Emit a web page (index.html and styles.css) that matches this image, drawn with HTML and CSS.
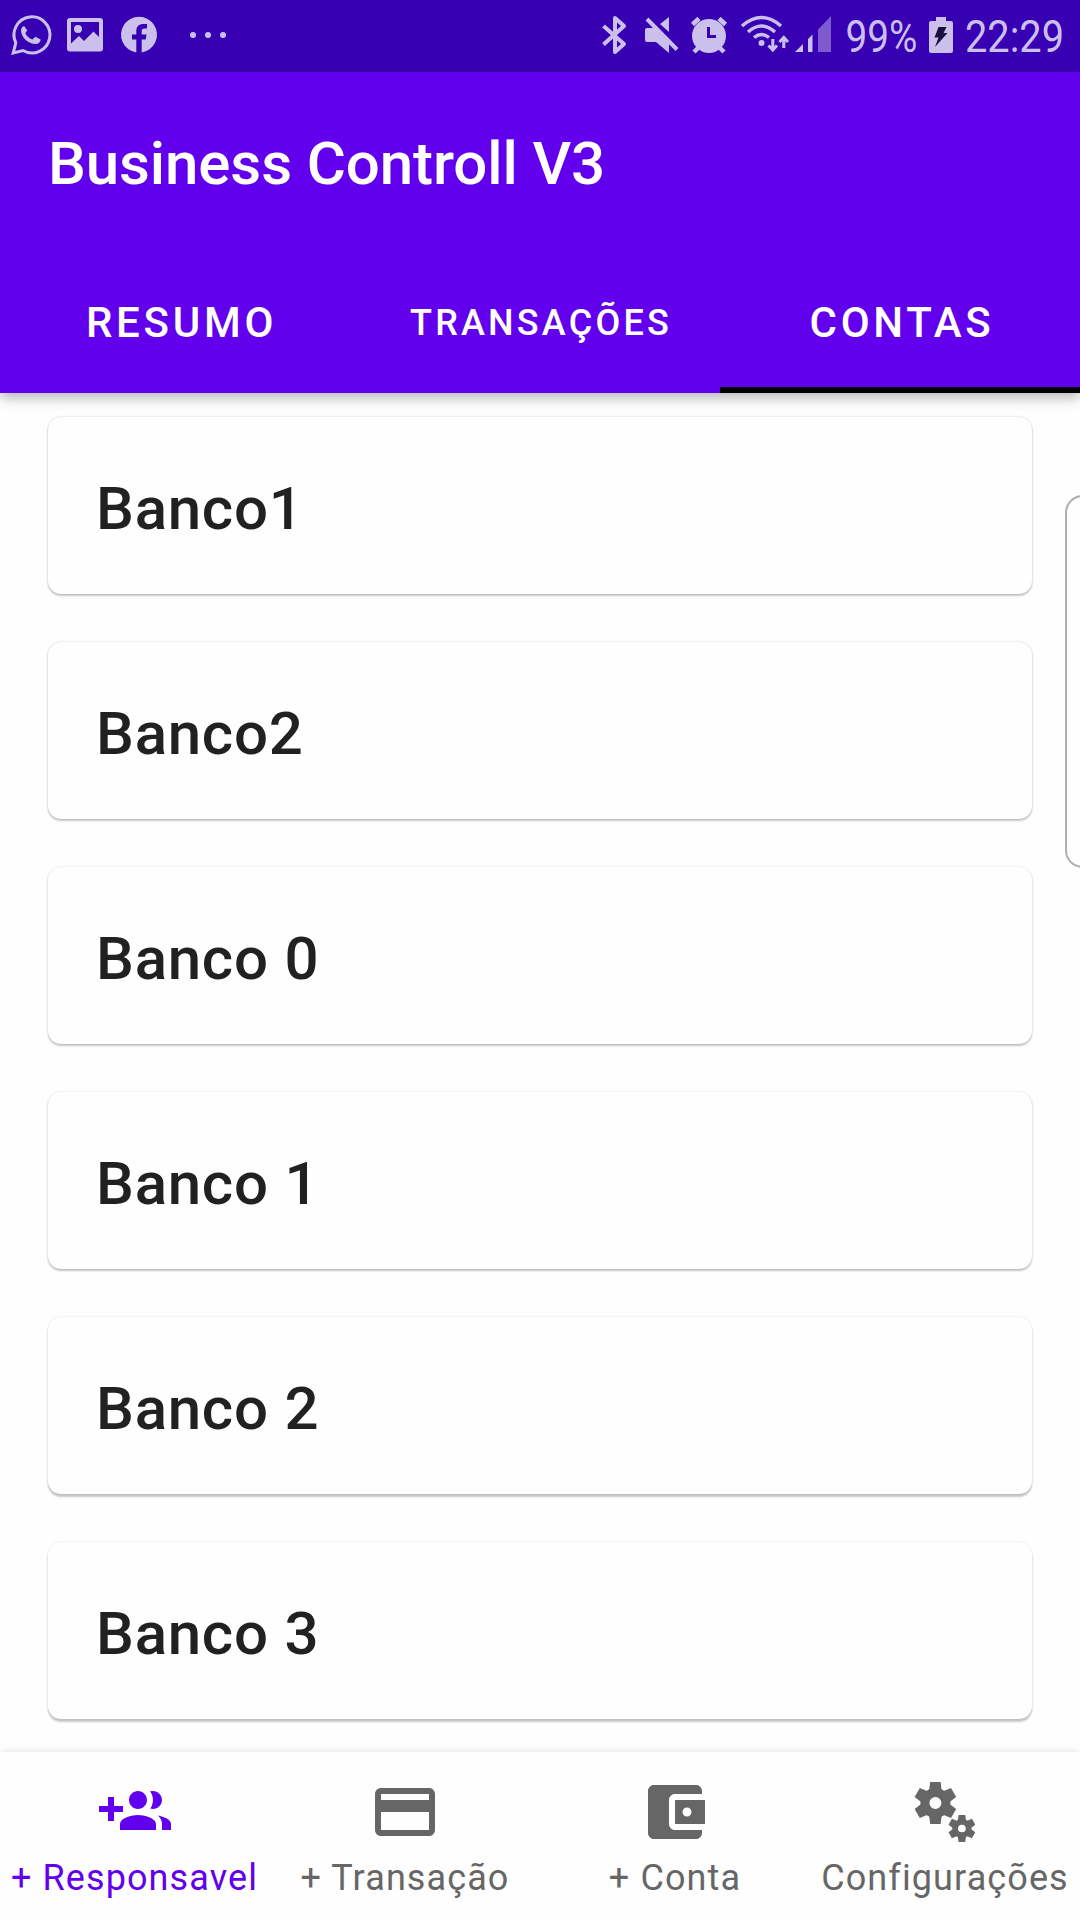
FILE: index.html
```html
<!DOCTYPE html>
<html lang="pt-BR">
<head>
<meta charset="utf-8">
<title>Business Controll V3</title>
<link rel="stylesheet" href="styles.css">
</head>
<body>
<div class="screen">
  <div class="status-bar">
    <div class="status-group">
      <svg width="56" height="72" viewBox="0 0 56 72"><path d="M13.2 53l2.6-10.2A18 18 0 1 1 23 50.5z" fill="none" stroke="currentColor" stroke-width="3"/><path d="M24.5 26.4c-1.3-.6-3.5 1.700-3.500 4.300C21.500 38.500 29 43.800 35.500 44c3 0 5-1.800 5.200-4.500l-5.400-2.800-2.900 2.900c-3.200-1-5.800-3.500-7.100-6.500l2-2.700z" fill="currentColor"/></svg>
      <svg width="56" height="72" viewBox="56 0 56 72"><path fill="currentColor" fill-rule="evenodd" d="M70 18H100a3 3 0 0 1 3 3V48.500a3 3 0 0 1-3 3H70a3 3 0 0 1-3-3V21a3 3 0 0 1 3-3ZM71 22V43.500L79 36L84 41L93.500 31.500L99 37V22Z"/><circle cx="78" cy="29" r="4" fill="currentColor"/></svg>
      <svg width="56" height="72" viewBox="112 0 56 72"><path fill="currentColor" d="M136.300 52.500V39.500H132V34.500H136.300V31C136.300 26.500 139 24 143.500 24H147V28.500H144.500C142.300 28.500 141.700 29.700 141.700 31.300V34.500H146.500L145.700 39.500H141.700V52.500A18 18 0 1 0 136.300 52.500Z"/></svg>
      <svg width="70" height="72" viewBox="168 0 70 72" fill="currentColor"><circle cx="193" cy="35" r="3"/><circle cx="208" cy="35" r="3"/><circle cx="223" cy="35" r="3"/></svg>
    </div>
    <div class="status-group">
      <svg width="46" height="72" viewBox="592 0 46 72"><path d="M603.500 26L624 44L615 52V18L624 26L603.500 44.500" fill="none" stroke="currentColor" stroke-width="4" stroke-linejoin="round"/></svg>
      <svg width="46" height="72" viewBox="638 0 46 72"><path fill="currentColor" d="M669 17V32L660 24ZM647 28H655L669 42V53L656 42H647Q645 42 645 40V30Q645 28 647 28Z"/><path d="M647 19L677 49.500" stroke="currentColor" stroke-width="4"/></svg>
      <svg width="50" height="72" viewBox="684 0 50 72"><circle cx="709" cy="36" r="17" fill="currentColor"/><path d="M692.500 24.500L699 18.500M719 18.500L725.500 24.500M698 48L694 52M720 48L724 52" stroke="currentColor" stroke-width="4.500"/><path d="M708.500 27V36.500H716" class="cutout"/></svg>
      <svg width="58" height="72" viewBox="734 0 58 72"><g fill="none" stroke="currentColor" stroke-width="3.500"><path d="M742 26Q761.500 9 781 26M748 32Q761.500 20 775 32M754 37.500Q761.500 31.500 769 37.500"/><path d="M772.800 39V49M768.500 45.500L772.800 50L777 45.500M783.800 48V38M779.500 42L783.800 37.500L788 42" stroke-width="3"/></g><circle cx="761.500" cy="43" r="3" fill="currentColor"/></svg>
      <svg width="46" height="72" viewBox="792 0 46 72" fill="currentColor"><path d="M795 52L803 44V52ZM808 52V39L812.500 34.500V52Z"/><path opacity=".48" d="M818 52V29.500L831 16V52Z"/></svg>
      <svg width="86" height="72" viewBox="838 0 86 72"><text class="status-text" x="845.500" y="51.700" textLength="72" lengthAdjust="spacingAndGlyphs">99%</text></svg>
      <svg width="34" height="72" viewBox="924 0 34 72"><path fill="currentColor" d="M936 17H946V21H951Q953 21 953 23V51Q953 53 951 53H931Q929 53 929 51V23Q929 21 931 21H936Z"/><path class="bolt" d="M938.500 27H946.500L943.500 33H947.500L935 47L938.500 37.500H934.500Z"/></svg>
      <svg width="122" height="72" viewBox="958 0 122 72"><text class="status-text" x="965" y="51.700" textLength="99" lengthAdjust="spacingAndGlyphs">22:29</text></svg>
    </div>
  </div>

  <header class="app-bar">
    <h1 class="title">Business Controll V3</h1>
    <nav class="tabs">
      <div class="tab">RESUMO</div>
      <div class="tab tab-small">TRANSAÇÕES</div>
      <div class="tab tab-active">CONTAS</div>
    </nav>
  </header>

  <main class="accounts">
    <div class="card">Banco1</div>
    <div class="card">Banco2</div>
    <div class="card card-mid">Banco 0</div>
    <div class="card card-mid">Banco 1</div>
    <div class="card card-low">Banco 2</div>
    <div class="card card-low">Banco 3</div>
    <div class="edge-handle"></div>
  </main>

  <nav class="bottom-nav">
    <div class="nav-item nav-active">
      <svg class="nav-icon" viewBox="0 0 24 24"><path d="M8 10H5V7H3v3H0v2h3v3h2v-3h3v-2zm10 1c1.660 0 2.990-1.340 2.990-3S19.660 5 18 5c-.32 0-.63.05-.91.14.57.81.9 1.790.9 2.860s-.34 2.040-.9 2.860c.28.09.59.14.91.14zm-5 0c1.660 0 2.990-1.340 2.990-3S14.660 5 13 5c-1.660 0-3 1.340-3 3s1.340 3 3 3zm6.620 2.160c.83.73 1.380 1.660 1.380 2.840v2h3v-2c0-1.540-2.370-2.490-4.380-2.840zM13 13c-2 0-6 1-6 3v2h12v-2c0-2-4-3-6-3z"/></svg>
      <span>+ Responsavel</span>
    </div>
    <div class="nav-item">
      <svg class="nav-icon" viewBox="0 0 24 24"><path d="M20 4H4c-1.110 0-1.990.89-1.990 2L2 18c0 1.110.89 2 2 2h16c1.110 0 2-.89 2-2V6c0-1.110-.89-2-2-2zm0 14H4v-6h16v6zm0-10H4V6h16v2z"/></svg>
      <span>+ Transação</span>
    </div>
    <div class="nav-item">
      <svg class="nav-icon" viewBox="0 0 24 24"><path d="M21 18v1c0 1.100-.9 2-2 2H5c-1.110 0-2-.9-2-2V5c0-1.100.89-2 2-2h14c1.100 0 2 .9 2 2v1h-9c-1.110 0-2 .9-2 2v8c0 1.100.89 2 2 2h9zm-9-2h10V8H12v8zm4-2.500c-.83 0-1.500-.67-1.500-1.500s.67-1.500 1.500-1.500 1.500.67 1.500 1.500-.67 1.500-1.500 1.500z"/></svg>
      <span>+ Conta</span>
    </div>
    <div class="nav-item">
      <svg class="nav-icon" viewBox="0 0 72 72">
        <defs>
          <path id="tooth" d="M-5.200-21H5.200L6.400-12H-6.400Z"/>
          <g id="gear">
            <circle r="10.500" fill="none" stroke="currentColor" stroke-width="9"/>
            <use href="#tooth"/><use href="#tooth" transform="rotate(60)"/><use href="#tooth" transform="rotate(120)"/><use href="#tooth" transform="rotate(180)"/><use href="#tooth" transform="rotate(240)"/><use href="#tooth" transform="rotate(300)"/>
          </g>
        </defs>
        <use href="#gear" transform="translate(26.400 27)"/>
        <use href="#gear" transform="translate(52.900 52.500) scale(.643)"/>
      </svg>
      <span>Configurações</span>
    </div>
  </nav>
</div>
</body>
</html>
```
FILE: styles.css
```css
* { box-sizing: border-box; }

body {
  margin: 0;
  font-family: Roboto, "Liberation Sans", sans-serif;
  background: #fefefe;
}

svg { display: block; flex: none; overflow: visible; }

.screen {
  width: 1080px;
  height: 1920px;
  display: flex;
  flex-direction: column;
  overflow: hidden;
}

.status-bar {
  height: 72px;
  flex: none;
  display: flex;
  justify-content: space-between;
  background: #3700b3;
  color: #cbbfec;
}

.status-group { display: flex; }

.status-text {
  font-size: 45px;
  font-weight: 400;
  fill: currentColor;
}

.cutout { fill: none; stroke: #3700b3; stroke-width: 3; }
.bolt { fill: #1b0f3b; }

.app-bar {
  height: 321px;
  flex: none;
  display: flex;
  flex-direction: column;
  background: #6200ee;
  color: #fff;
  box-shadow: 0 5px 12px rgba(0, 0, 0, .28);
  position: relative;
  z-index: 1;
}

.title {
  margin: 0;
  padding: 56px 48px 0;
  height: 177px;
  font-size: 60px;
  line-height: 72px;
  font-weight: 500;
  letter-spacing: -.1px;
}

.tabs {
  display: grid;
  grid-template-columns: repeat(3, 1fr);
  height: 144px;
}

.tab {
  display: flex;
  justify-content: center;
  padding: 50px 0 0 3px;
  font-size: 42px;
  line-height: 48px;
  font-weight: 500;
  letter-spacing: .0893em;
}

.tab-small { font-size: 36px; padding-left: 2px; }
.tab-active { border-bottom: 6px solid #000; padding-left: 4px; }

.accounts {
  flex: 1;
  display: flex;
  flex-direction: column;
  gap: 48px;
  padding: 24px 48px 0;
  position: relative;
}

.card {
  height: 177px;
  flex: none;
  padding: 56px 48px 0;
  border-radius: 13px;
  background: #fefefe;
  color: #212121;
  font-size: 60px;
  line-height: 72px;
  font-weight: 500;
  letter-spacing: .0125em;
  box-shadow: 0 0 2px rgba(0, 0, 0, .22), 0 2px 2px rgba(0, 0, 0, .2);
}

/* Shadows lengthen towards the bottom of the screen */
.card-mid { box-shadow: 0 0 2px rgba(0, 0, 0, .16), 0 2px 2px rgba(0, 0, 0, .22); }
.card-low { box-shadow: 0 0 2px rgba(0, 0, 0, .13), 0 3px 2px rgba(0, 0, 0, .22); }

/* Side-panel handle that peeks in over the list */
.edge-handle {
  position: absolute;
  top: 102px;
  right: -20px;
  width: 35px;
  height: 373px;
  border: 2px solid #b0b0b0;
  border-radius: 20px;
  background: #fefefe;
}

.bottom-nav {
  height: 168px;
  flex: none;
  display: flex;
  background: #fefefe;
  color: #666;
  box-shadow: 0 0 8px rgba(0, 0, 0, .13);
  position: relative;
}

.nav-item {
  flex: 1 1 0;
  min-width: 0;
  display: flex;
  flex-direction: column;
  align-items: center;
  padding-top: 24px;
  font-size: 36px;
  line-height: 42px;
  letter-spacing: 1.1px;
  white-space: nowrap;
}

.nav-active { color: #6200ee; }
.nav-active span { margin-left: -1px; }

.nav-icon {
  width: 72px;
  height: 72px;
  margin-bottom: 9px;
  fill: currentColor;
}
```
